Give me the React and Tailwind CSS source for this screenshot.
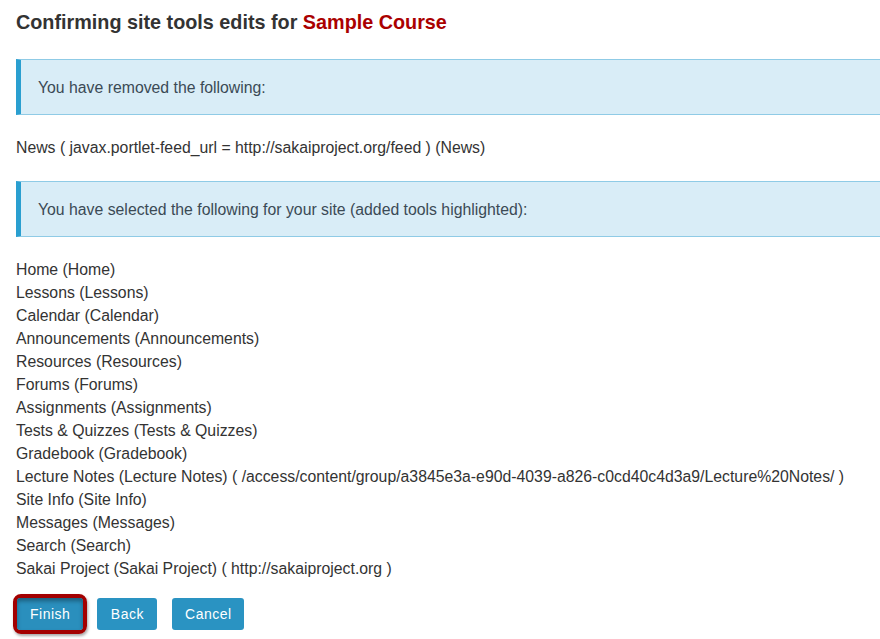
export default function App() {
  const items = [
    "Home (Home)",
    "Lessons (Lessons)",
    "Calendar (Calendar)",
    "Announcements (Announcements)",
    "Resources (Resources)",
    "Forums (Forums)",
    "Assignments (Assignments)",
    "Tests & Quizzes (Tests & Quizzes)",
    "Gradebook (Gradebook)",
    "Lecture Notes (Lecture Notes) ( /access/content/group/a3845e3a-e90d-4039-a826-c0cd40c4d3a9/Lecture%20Notes/ )",
    "Site Info (Site Info)",
    "Messages (Messages)",
    "Search (Search)",
    "Sakai Project (Sakai Project) ( http://sakaiproject.org )",
  ];
  return (
    <div
      className="w-[880px] h-[639px] overflow-hidden bg-white pl-4 text-[#333333]"
      style={{ fontFamily: '"Liberation Sans", Arial, sans-serif' }}
    >
      <h1 className="mt-[10px] text-[19.8px] leading-[24px] font-bold text-[#333333]">
        Confirming site tools edits for <span className="text-[#aa0000]">Sample Course</span>
      </h1>
      <div className="mt-[25px] -mr-4 h-[56px] flex items-center pt-[2px] bg-[#d9edf7] border-y border-[#8fcbe6] border-l-[5px] border-l-[#2a9fd0] pl-[17px] text-[15.8px] text-[#3b4a55]">
        You have removed the following:
      </div>
      <div className="mt-[21px] text-[15.8px] leading-[23px]">
        News ( javax.portlet-feed_url = http://sakaiproject.org/feed ) (News)
      </div>
      <div className="mt-[22px] -mr-4 h-[56px] flex items-center pt-[2px] bg-[#d9edf7] border-y border-[#8fcbe6] border-l-[5px] border-l-[#2a9fd0] pl-[17px] text-[15.8px] text-[#3b4a55]">
        You have selected the following for your site (added tools highlighted):
      </div>
      <ul className="mt-[21px] text-[15.8px] leading-[23px]">
        {items.map((t) => (
          <li key={t} className="whitespace-nowrap">{t}</li>
        ))}
      </ul>
      <div className="mt-[14px] -ml-[3px] flex items-center">
        <div className="rounded-[8px] border-[4px] border-[#a30000] shadow-[1px_2px_3px_rgba(0,0,0,0.35)]">
          <button className="h-[32px] px-[13px] pt-[1px] rounded-[3px] bg-[#2a8fbd] text-white text-[14px] tracking-[0.5px] shadow-[inset_0_3px_4px_rgba(0,0,0,0.35)]">
            Finish
          </button>
        </div>
        <button className="ml-[10px] h-[32px] w-[60px] rounded-[3px] bg-[#2a93c2] text-white text-[14px] tracking-[0.5px]">
          Back
        </button>
        <button className="ml-[15px] h-[32px] w-[72px] rounded-[3px] bg-[#2a93c2] text-white text-[14px] tracking-[0.5px]">
          Cancel
        </button>
      </div>
    </div>
  );
}
